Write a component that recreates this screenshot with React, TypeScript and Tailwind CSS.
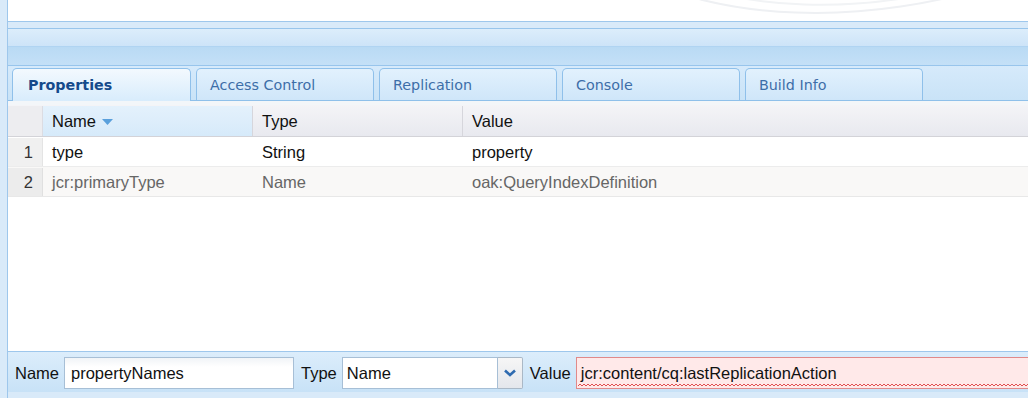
import React from "react";

const tabs = ["Properties", "Access Control", "Replication", "Console", "Build Info"];

export default function App() {
  return (
    <div
      className="w-[1028px] h-[398px] overflow-hidden bg-[#d9eaf9] pl-[7px] flex"
      style={{ fontFamily: '"Liberation Sans", Arial, sans-serif' }}
    >
      <div className="flex-1 flex flex-col border-l border-[#9ec7ec] min-w-0">
        {/* top white panel */}
        <div className="relative h-[22px] shrink-0 bg-white border-b border-[#9ec7ec] overflow-hidden">
          <svg className="absolute left-[560px] top-[-40px]" width="460" height="70" viewBox="0 0 460 70">
            <path d="M60 10 C 140 60, 300 70, 440 20" fill="none" stroke="#eef0f3" strokeWidth="2" />
            <path d="M80 6 C 160 52, 300 60, 430 14" fill="none" stroke="#f1f3f5" strokeWidth="2" />
            <path d="M100 2 C 180 44, 300 50, 420 8" fill="none" stroke="#f3f4f6" strokeWidth="1.5" />
          </svg>
        </div>
        <div className="h-[6px] shrink-0" />
        {/* header bar */}
        <div className="h-[38px] shrink-0 border-t border-b border-[#98c5ec] flex flex-col">
          <div className="h-[17px] bg-gradient-to-b from-[#dcedfb] to-[#cde4f8]" />
          <div className="flex-1 bg-gradient-to-b from-[#b9daf4] to-[#c4e0f7] border-t border-[#b0d4f2]" />
        </div>
        {/* tab strip */}
        <div
          className="h-[35px] shrink-0 bg-gradient-to-b from-[#d6eafb] to-[#c9e3f7] border-b border-[#8fc0ea] flex items-end pl-[4px] gap-[5px]"
          style={{ fontFamily: '"DejaVu Sans", Tahoma, sans-serif' }}
        >
          {tabs.map((t, i) =>
            i === 0 ? (
              <div
                key={t}
                className="w-[179px] h-[33px] -mb-px rounded-t-[5px] border border-b-0 border-[#8fc0ea] bg-gradient-to-b from-[#f3f9fe] to-[#d8ecfc] flex items-center pl-[15px] pt-[2px] text-[14.3px] font-bold text-[#154a8b]"
              >
                {t}
              </div>
            ) : (
              <div
                key={t}
                className="w-[178px] h-[32px] rounded-t-[5px] border border-b-0 border-[#8fc0ea] bg-gradient-to-b from-[#e2f1fd] to-[#cfe6f9] flex items-center pl-[13px] pt-[2px] text-[14.3px] text-[#3d6ea8]"
              >
                {t}
              </div>
            )
          )}
        </div>
        <div className="h-[4px] shrink-0 bg-[#f3f6f9]" />
        {/* grid */}
        <div className="flex-1 bg-white flex flex-col text-[16.5px]">
          <div className="h-[32px] flex bg-gradient-to-b from-[#f4f4f7] to-[#e8e9ef] border-b border-[#d3d3d8] text-[#111] pt-px">
            <div className="w-[35px] border-r border-[#dcdce2] bg-[#ededf0]" />
            <div className="w-[210px] border-r border-[#d6d6dc] bg-gradient-to-b from-[#e4f1fc] to-[#d6eafa] flex items-center pl-[9px]">
              Name
              <svg className="ml-[6px] mt-[2px]" width="11" height="6" viewBox="0 0 11 6">
                <path d="M0 0 L11 0 L5.5 6 Z" fill="#5aa0dc" />
              </svg>
            </div>
            <div className="w-[210px] border-r border-[#d6d6dc] flex items-center pl-[9px]">Type</div>
            <div className="flex-1 flex items-center pl-[9px]">Value</div>
          </div>
          <div className="h-[30px] flex border-b border-[#ececec] text-[#111] pt-px">
            <div className="w-[35px] bg-[#f0f0f0] border-r border-[#e4e4e4] flex items-center justify-end pr-[9px] text-[#333]">1</div>
            <div className="w-[210px] flex items-center pl-[9px]">type</div>
            <div className="w-[210px] flex items-center pl-[9px]">String</div>
            <div className="flex-1 flex items-center pl-[9px]">property</div>
          </div>
          <div className="h-[30px] flex border-b border-[#e8e8e8] bg-[#f9f8f7] text-[#666] pt-px">
            <div className="w-[35px] bg-[#ececec] border-r border-[#e0e0e0] flex items-center justify-end pr-[9px] text-[#333]">2</div>
            <div className="w-[210px] flex items-center pl-[9px]">jcr:primaryType</div>
            <div className="w-[210px] flex items-center pl-[9px]">Name</div>
            <div className="flex-1 flex items-center pl-[9px]">oak:QueryIndexDefinition</div>
          </div>
          <div className="flex-1" />
        </div>
        {/* toolbar */}
        <div className="h-[41px] shrink-0 border-t border-[#9ec7ec] bg-gradient-to-b from-[#dcedfb] to-[#c8e2f7] flex items-start pt-[5px] text-[16.5px] text-[#111]">
          <span className="ml-[7px] mr-[5px] h-[32px] flex items-center">Name</span>
          <div className="w-[230px] h-[32px] border border-[#a7bfd6] bg-gradient-to-b from-[#f1f4f7] to-white to-[30%] flex items-center pl-[6px]">
            propertyNames
          </div>
          <span className="ml-[7px] mr-[5px] h-[32px] flex items-center">Type</span>
          <div className="w-[181px] h-[32px] flex">
            <div className="flex-1 border border-[#a7bfd6] bg-white flex items-center pl-[4px]">Name</div>
            <div className="w-[25px] border border-l-0 border-[#aab8c6] bg-gradient-to-b from-[#f6f6f6] to-[#e4e7ec] flex items-center justify-center rounded-r-[2px]">
              <svg width="12" height="8" viewBox="0 0 12 8">
                <path d="M1 1.5 L6 6 L11 1.5" fill="none" stroke="#2f6bb0" strokeWidth="2.6" />
              </svg>
            </div>
          </div>
          <span className="ml-[7px] mr-[5px] h-[32px] flex items-center">Value</span>
          <div className="relative flex-1 -mr-[10px] h-[32px] border border-[#e08a8a] bg-[#ffe9e9] flex items-center pl-[4px]">
            jcr:content/cq:lastReplicationAction
            <svg className="absolute left-[1px] right-0 bottom-[1px]" width="100%" height="4" preserveAspectRatio="none">
              <defs>
                <pattern id="wave" width="4" height="4" patternUnits="userSpaceOnUse">
                  <path d="M0 3 L2 1 L4 3" fill="none" stroke="#e05050" strokeWidth="1" />
                </pattern>
              </defs>
              <rect width="100%" height="4" fill="url(#wave)" />
            </svg>
          </div>
        </div>
        <div className="h-[6px] shrink-0" />
      </div>
    </div>
  );
}
